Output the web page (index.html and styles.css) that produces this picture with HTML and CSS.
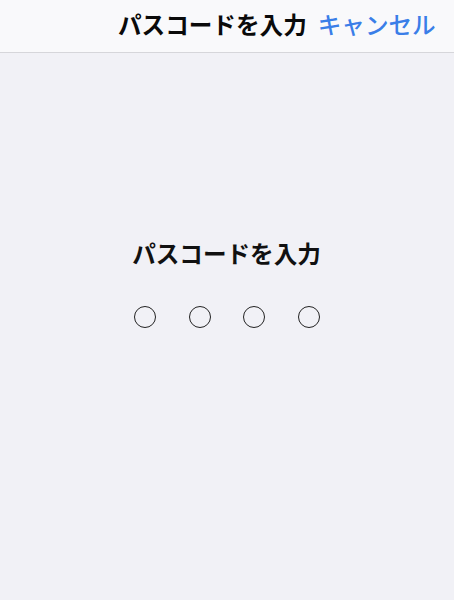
FILE: index.html
```html
<!DOCTYPE html>
<html lang="ja">
<head>
<meta charset="utf-8">
<link rel="stylesheet" href="styles.css">
</head>
<body>
<div class="screen">
  <header class="navbar">
    <span class="nav-title">パスコードを入力</span>
    <span class="nav-cancel">キャンセル</span>
  </header>
  <main class="content">
    <h1 class="prompt">パスコードを入力</h1>
    <div class="dots">
      <span class="dot"></span>
      <span class="dot"></span>
      <span class="dot"></span>
      <span class="dot"></span>
    </div>
  </main>
</div>
</body>
</html>
```
FILE: styles.css
```css
html, body {
  margin: 0;
  padding: 0;
}
body {
  font-family: "Noto Sans CJK JP", "Noto Sans", sans-serif;
  background: #f1f1f6;
}
.screen {
  width: 454px;
  height: 600px;
  display: flex;
  flex-direction: column;
}
.navbar {
  height: 53px;
  box-sizing: border-box;
  border-bottom: 1px solid #d6d6da;
  background: #f9f9fb;
  display: flex;
  align-items: center;
  padding-left: 118px;
  gap: 11px;
  padding-bottom: 2px;
}
.nav-title {
  font-size: 23.6px;
  font-weight: 700;
  color: #0a0a0a;
  line-height: 1;
}
.nav-cancel {
  font-size: 23.6px;
  font-weight: 500;
  color: #3a7ee8;
  line-height: 1;
}
.content {
  flex: 1;
  display: flex;
  flex-direction: column;
  align-items: center;
  padding-top: 185px;
}
.prompt {
  margin: 0;
  font-size: 23.6px;
  font-weight: 700;
  color: #111;
  line-height: 30px;
  padding-right: 1px;
}
.dots {
  margin-top: 38px;
  display: flex;
  gap: 32.5px;
}
.dot {
  width: 20px;
  height: 20px;
  border: 1.6px solid #222;
  border-radius: 50%;
}
```
